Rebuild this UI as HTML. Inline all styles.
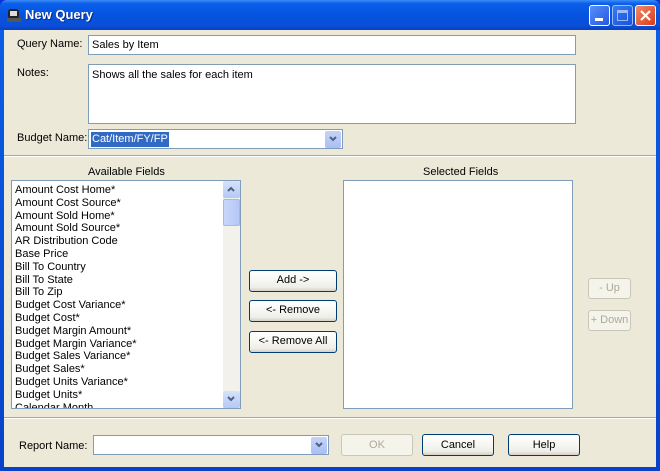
<!DOCTYPE html><html><head><style>
*{box-sizing:border-box;margin:0;padding:0}
body{width:660px;height:471px;overflow:hidden;font-family:"Liberation Sans",sans-serif;font-size:11px;color:#000;background:#0831d9}
.win{position:absolute;left:0;top:0;width:660px;height:471px;background:linear-gradient(#0a5fe6,#0842c8);border-radius:7px 7px 0 0}
.title{position:absolute;left:0;top:0;width:660px;height:30px;background:linear-gradient(#3c8cf8 0,#0b5fe8 12%,#0553e0 50%,#0a4fd8 85%,#0b3fc0 100%);border-radius:7px 7px 0 0}
.title span{position:absolute;left:25px;top:7px;color:#fff;font-weight:bold;font-size:13px;text-shadow:1px 1px #0a2a80}
.tb{position:absolute;top:5px;width:21px;height:21px;border:1px solid #fff;border-radius:3px;background:linear-gradient(135deg,#5a8ff8,#2458e0)}
.body{position:absolute;left:4px;top:30px;width:652px;height:437px;background:#ece9d8}
.a{position:absolute}
.in{position:absolute;background:#fff;border:1px solid #7f9db9}
.btn{position:absolute;border:1px solid #003c74;border-radius:3px;background:linear-gradient(#fff,#f0f0ea 80%,#d6d0c5);text-align:center;line-height:19px}
.dis{border-color:#c9c7ba;color:#aca899;background:#f5f4ea}
.dd{position:absolute;right:1px;top:1px;width:16px;height:17px;background:linear-gradient(#c6d3f7,#a9bff3);border-radius:2px}
.sep{position:absolute;left:0;width:652px;height:2px;border-top:1px solid #aca899;border-bottom:1px solid #fff}
.list div{height:12.8px;line-height:12.8px;padding-left:3px;white-space:nowrap}
svg.ar{position:absolute;left:4px;top:5px}
</style></head><body>
<div class="win">
<div class="title">
<svg class="a" style="left:6px;top:7px" width="16" height="16"><rect x="2" y="2" width="11" height="10" rx="3" fill="#222"/><rect x="4" y="4" width="7" height="5" fill="#ddd"/><rect x="1" y="11" width="14" height="4" fill="#555"/></svg>
<span>New Query</span>
<div class="tb" style="left:589px"><div class="a" style="left:5px;top:12px;width:8px;height:3px;background:#fff"></div></div>
<div class="tb" style="left:612px;opacity:.6"><div class="a" style="left:4px;top:4px;width:11px;height:11px;border:1px solid #fff;border-top-width:3px"></div></div>
<div class="tb" style="left:635px;background:linear-gradient(135deg,#f08a6c,#d83c1a)"><svg class="a" style="left:3px;top:3px" width="13" height="13"><path d="M2 2L11 11M11 2L2 11" stroke="#fff" stroke-width="2.2"/></svg></div>
</div>
<div class="body">
<div class="a" style="left:13px;top:8px">Query Name:</div>
<div class="in" style="left:84px;top:5px;width:488px;height:20px;padding:3px 3px">Sales by Item</div>
<div class="a" style="left:13px;top:37px">Notes:</div>
<div class="in" style="left:84px;top:34px;width:488px;height:60px;padding:4px 3px">Shows all the sales for each item</div>
<div class="a" style="left:13px;top:102px">Budget Name:</div>
<div class="in" style="left:84px;top:99px;width:255px;height:20px"><span class="a" style="left:2px;top:2px;background:#316ac5;color:#fff;padding:1px 1px;line-height:13px">Cat/Item/FY/FP</span><div class="dd"><svg class="ar" width="8" height="6"><path d="M1 1L4 4L7 1" stroke="#4d6185" stroke-width="2" fill="none"/></svg></div></div>
<div class="sep" style="top:125px"></div>
<div class="a" style="left:84px;top:136px">Available Fields</div>
<div class="in list" style="left:7px;top:150px;width:230px;height:229px;overflow:hidden;padding-top:3px">
<div>Amount Cost Home*</div><div>Amount Cost Source*</div><div>Amount Sold Home*</div><div>Amount Sold Source*</div><div>AR Distribution Code</div><div>Base Price</div><div>Bill To Country</div><div>Bill To State</div><div>Bill To Zip</div><div>Budget Cost Variance*</div><div>Budget Cost*</div><div>Budget Margin Amount*</div><div>Budget Margin Variance*</div><div>Budget Sales Variance*</div><div>Budget Sales*</div><div>Budget Units Variance*</div><div>Budget Units*</div><div>Calendar Month</div>
<div class="a" style="right:0;top:0;width:17px;height:227px;background:#f3f1ec">
<div class="a" style="left:0;top:0;width:17px;height:17px;background:linear-gradient(#d6e2fb,#b5c8f5);border-radius:2px"><svg class="ar" width="8" height="6"><path d="M1 5L4 2L7 5" stroke="#4d6185" stroke-width="2" fill="none"/></svg></div>
<div class="a" style="left:0;top:18px;width:17px;height:27px;background:linear-gradient(90deg,#c8d6fa,#b4c8f6);border:1px solid #a5b8e6;border-radius:2px"></div>
<div class="a" style="left:0;bottom:0;width:17px;height:17px;background:linear-gradient(#d6e2fb,#b5c8f5);border-radius:2px"><svg class="ar" width="8" height="6"><path d="M1 1L4 4L7 1" stroke="#4d6185" stroke-width="2" fill="none"/></svg></div>
</div></div>
<div class="a" style="left:419px;top:136px">Selected Fields</div>
<div class="in" style="left:339px;top:150px;width:230px;height:229px"></div>
<div class="btn" style="left:245px;top:240px;width:88px;height:22px">Add -&gt;</div>
<div class="btn" style="left:245px;top:270px;width:88px;height:22px">&lt;- Remove</div>
<div class="btn" style="left:245px;top:301px;width:88px;height:22px">&lt;- Remove All</div>
<div class="btn dis" style="left:584px;top:248px;width:43px;height:21px">- Up</div>
<div class="btn dis" style="left:584px;top:280px;width:43px;height:21px">+ Down</div>
<div class="sep" style="top:387px"></div>
<div class="a" style="left:15px;top:410px">Report Name:</div>
<div class="in" style="left:89px;top:405px;width:236px;height:20px"><div class="dd"><svg class="ar" width="8" height="6"><path d="M1 1L4 4L7 1" stroke="#4d6185" stroke-width="2" fill="none"/></svg></div></div>
<div class="btn dis" style="left:337px;top:404px;width:72px;height:22px;line-height:20px">OK</div>
<div class="btn" style="left:418px;top:404px;width:72px;height:22px;line-height:20px">Cancel</div>
<div class="btn" style="left:504px;top:404px;width:72px;height:22px;line-height:20px">Help</div>
</div></div>
</body></html>
